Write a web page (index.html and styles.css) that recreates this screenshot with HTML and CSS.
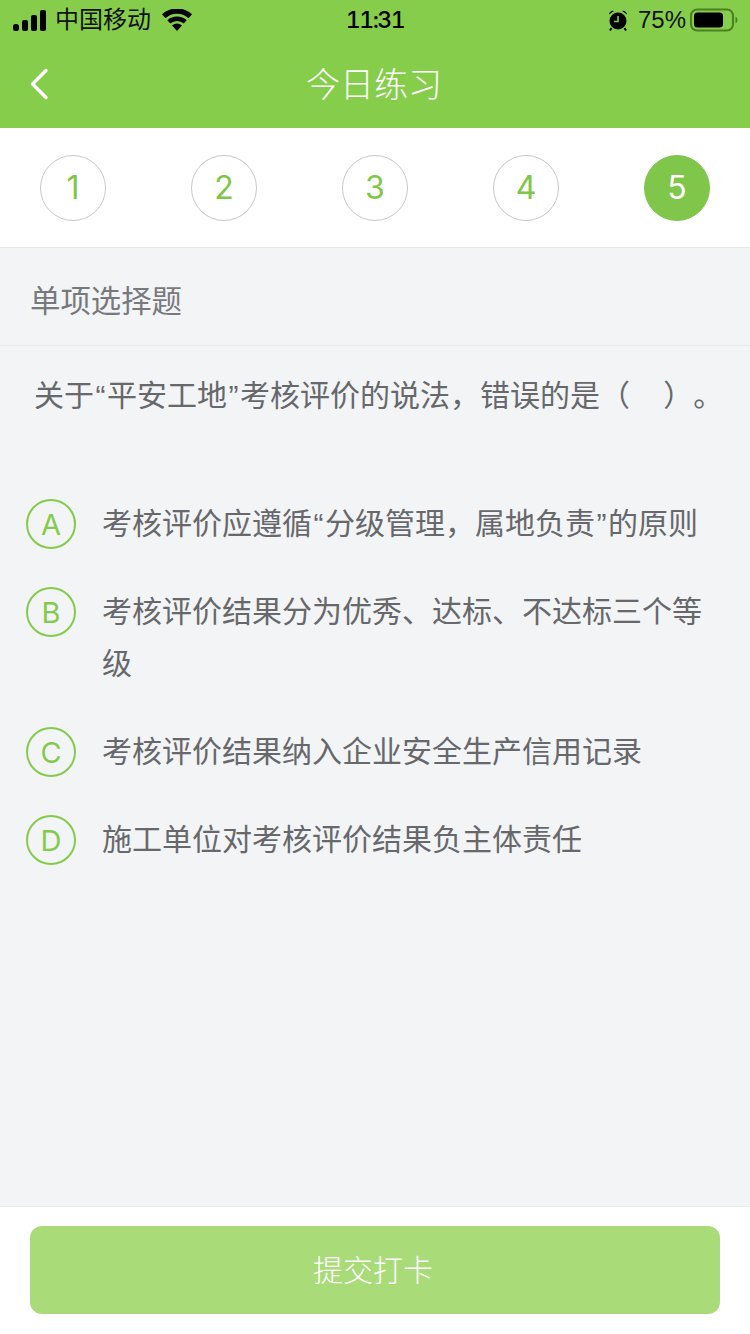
FILE: index.html
```html
<!DOCTYPE html>
<html lang="zh-CN">
<head>
    <meta charset="UTF-8" />
    <meta name="viewport" content="width=device-width, initial-scale=1.0"/>
    <title>今日练习</title>
    <link rel="stylesheet" href="styles.css">
</head>
<body>
    <div class="page">
        <header class="top">
            <div class="status">
                <div class="status-left">
                    <svg class="signal" width="34" height="21" viewBox="0 0 34 21">
                        <rect x="0" y="14" width="6" height="7" rx="2.500"/>
                        <rect x="9" y="10" width="6" height="11" rx="2"/>
                        <rect x="18" y="5" width="6" height="16" rx="2"/>
                        <rect x="27" y="0" width="6" height="21" rx="2"/>
                    </svg>
                    <span class="carrier">中国移动</span>
                    <svg class="wifi" width="30" height="22" viewBox="0 0 30 22">
                        <path d="M15 22l-5-5.600a7.500 7.500 0 0 1 10 0z"/>
                        <path d="M8.300 14.500l-3-3.300a14.500 14.500 0 0 1 19.400 0l-3 3.300a10 10 0 0 0-13.400 0z"/>
                        <path d="M3.500 9.200L0 5.300a22 22 0 0 1 30 0l-3.500 3.900a17 17 0 0 0-23 0z"/>
                    </svg>
                </div>
                <div class="clock">11:31</div>
                <div class="status-right">
                    <svg class="alarm" width="20" height="22" viewBox="0 0 20 22">
                        <circle cx="10" cy="12" r="8.500"/>
                        <path d="M1 5.500a4 4 0 0 1 5-3.500zM19 5.500a4 4 0 0 0-5-3.500z"/>
                        <path d="M3.500 19l-1.500 2.500M16.500 19l1.500 2.500" stroke="#000" stroke-width="2"/>
                        <path d="M10 7v5.500H6" fill="none" stroke="#86cd4b" stroke-width="1.600"/>
                    </svg>
                    <span class="percent">75%</span>
                    <svg class="battery" width="48" height="24" viewBox="0 0 48 24">
                        <rect x="1" y="1.500" width="42" height="21" rx="6" fill="none" stroke="#4c7f25" stroke-width="2"/>
                        <rect x="4" y="4.500" width="29" height="15" rx="3.500" fill="#000"/>
                        <path d="M45.500 8.500a4 4 0 0 1 0 7z" fill="#4c7f25"/>
                    </svg>
                </div>
            </div>
            <div class="nav">
                <svg class="back" width="20" height="32" viewBox="0 0 20 32">
                    <path d="M17 2.500L3.500 16 17 29.500" fill="none" stroke="#fff" stroke-width="3.500" stroke-linecap="round" stroke-linejoin="round"/>
                </svg>
                <h1>今日练习</h1>
            </div>
        </header>

        <div class="steps">
            <div class="step">1</div>
            <div class="step">2</div>
            <div class="step">3</div>
            <div class="step">4</div>
            <div class="step active">5</div>
        </div>

        <main class="content">
            <div class="type">单项选择题</div>
            <div class="question">关于<span class="quote">“</span>平安工地<span class="quote">”</span>考核评价的说法，错误的是（&nbsp;&nbsp;&nbsp;&nbsp;）。</div>
            <div class="options">
                <div class="option">
                    <div class="letter">A</div>
                    <div class="option-text">考核评价应遵循<span class="quote">“</span>分级管理，属地负责<span class="quote">”</span>的原则</div>
                </div>
                <div class="option">
                    <div class="letter">B</div>
                    <div class="option-text">考核评价结果分为优秀、达标、不达标三个等级</div>
                </div>
                <div class="option">
                    <div class="letter">C</div>
                    <div class="option-text">考核评价结果纳入企业安全生产信用记录</div>
                </div>
                <div class="option">
                    <div class="letter">D</div>
                    <div class="option-text">施工单位对考核评价结果负主体责任</div>
                </div>
            </div>
        </main>

        <footer class="bottom">
            <button class="submit">提交打卡</button>
        </footer>
    </div>
</body>
</html>
```
FILE: styles.css
```css
* {
    box-sizing: border-box;
}
html, body {
    margin: 0;
    padding: 0;
}
body {
    font-family: "Liberation Sans", "Noto Sans CJK SC", sans-serif;
    background-color: #f3f4f6;
    text-spacing-trim: space-all;
}
.page {
    width: 750px;
    height: 1334px;
    display: flex;
    flex-direction: column;
    overflow: hidden;
}
.top {
    height: 128px;
    background-color: #86cd4b;
}
.status {
    height: 40px;
    padding: 0 13px;
    display: flex;
    align-items: center;
    justify-content: space-between;
    position: relative;
    color: #000;
}
.status-left, .status-right {
    display: flex;
    align-items: center;
}
.signal, .wifi, .alarm {
    fill: #000;
}
.carrier {
    font-size: 24px;
    line-height: 24px;
    margin-left: 8px;
    color: #111;
}
.wifi {
    margin-left: 11px;
}
.clock {
    position: absolute;
    left: 0;
    right: 0;
    text-align: center;
    font-family: Inter, "Liberation Sans", sans-serif;
    font-size: 23px;
    font-weight: 500;
    font-variant-numeric: tabular-nums;
    letter-spacing: -1.500px;
}
.alarm {
    margin-right: 1px;
}
.percent {
    font-size: 24px;
    margin-left: 9px;
    margin-right: 4px;
    color: #111;
}
.battery {
    margin-right: -1px;
}
.nav {
    height: 88px;
    display: flex;
    align-items: center;
    justify-content: center;
    position: relative;
}
.back {
    position: absolute;
    left: 29px;
    top: 28px;
}
h1 {
    margin: 0;
    font-size: 34px;
    font-weight: 300;
    color: #fff;
    position: relative;
    top: -2px;
    left: -1px;
}
.steps {
    height: 120px;
    padding: 0 40px;
    display: flex;
    align-items: center;
    justify-content: space-between;
    background-color: #fff;
    border-bottom: 1px solid #e6e7e9;
}
.step {
    width: 66px;
    height: 66px;
    border: 1px solid #c8c8c8;
    border-radius: 50%;
    display: flex;
    align-items: center;
    justify-content: center;
    font-family: Inter, "Liberation Sans", sans-serif;
    font-size: 32px;
    font-weight: 400;
    color: #7fc64a;
}
.step.active {
    background-color: #7fc64a;
    border-color: #7fc64a;
    color: #fff;
}
.content {
    flex: 1;
}
.type {
    height: 98px;
    padding: 5px 30px 0;
    display: flex;
    align-items: center;
    font-size: 30.400px;
    color: #77797c;
    border-bottom: 1px solid #e8e9eb;
}
.question {
    padding: 28px 10px 0 34px;
    line-height: 44px;
    font-size: 30px;
    color: #66686b;
}
.quote {
    padding: 0 1.500px;
}
.options {
    padding: 81px 26px 0;
}
.option {
    display: flex;
    align-items: flex-start;
    margin-bottom: 36px;
}
.letter {
    flex: none;
    width: 50px;
    height: 50px;
    border: 2px solid #84cb4c;
    border-radius: 50%;
    display: flex;
    align-items: center;
    justify-content: center;
    font-family: Inter, "Liberation Sans", sans-serif;
    font-size: 29px;
    font-weight: 400;
    color: #84cb4c;
}
.option-text {
    margin: -1px 0 0 26px;
    padding-bottom: 1px;
    line-height: 52px;
    font-size: 30px;
    color: #66686b;
}
.bottom {
    height: 128px;
    padding: 19px 30px;
    background-color: #fff;
    border-top: 1px solid #e8e9eb;
}
.submit {
    width: 100%;
    height: 88px;
    padding: 0 4px 4px 0;
    border: none;
    border-radius: 12px;
    background-color: #aadb79;
    color: #fff;
    font-family: inherit;
    font-size: 30px;
    font-weight: 300;
}
```
